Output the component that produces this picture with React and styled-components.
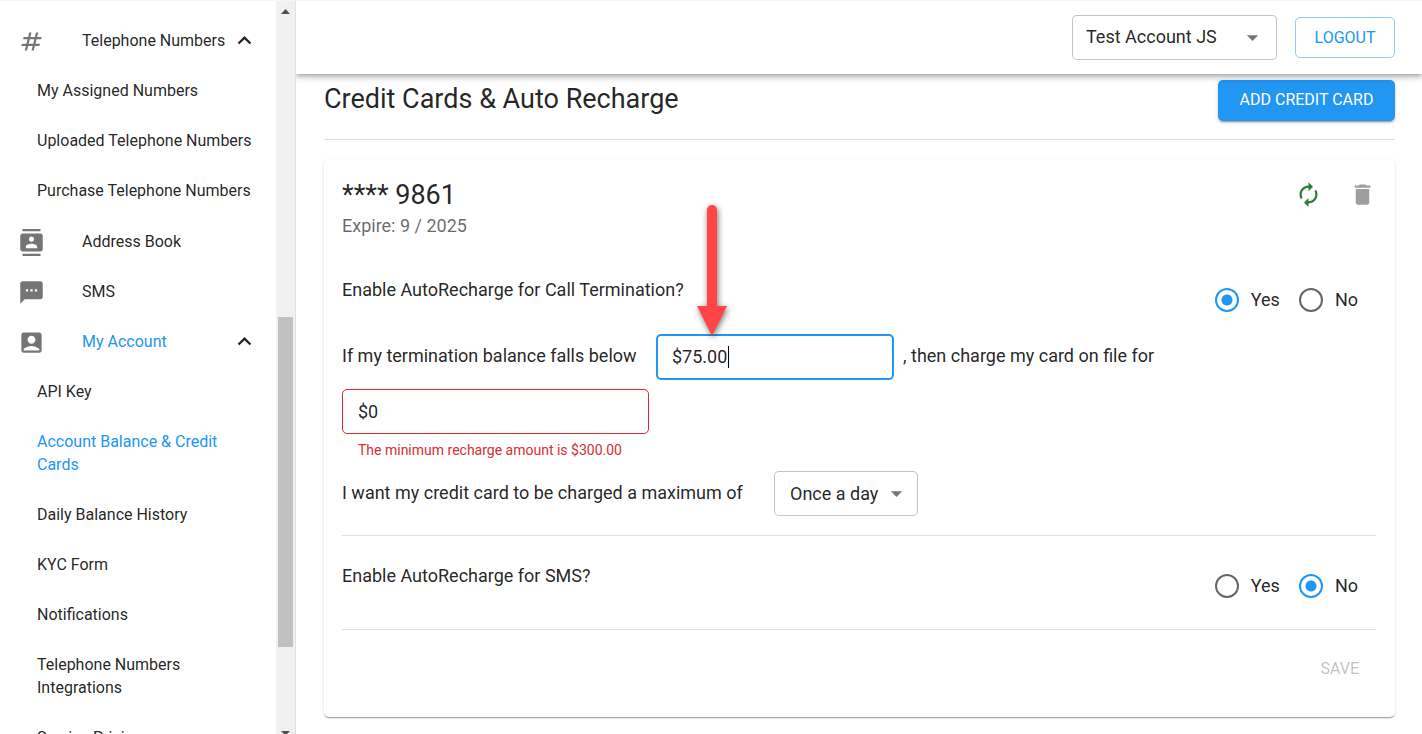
import React, { useState } from "react";
import styled, { createGlobalStyle, css } from "styled-components";
import {
  MdNumbers,
  MdContacts,
  MdSms,
  MdAccountBox,
  MdExpandLess,
  MdAutorenew,
  MdDelete,
  MdArrowDropDown,
} from "react-icons/md";

const color = {
  text: "rgba(0, 0, 0, 0.87)",
  muted: "rgba(0, 0, 0, 0.6)",
  icon: "rgba(0, 0, 0, 0.54)",
  outline: "rgba(0, 0, 0, 0.23)",
  divider: "rgba(0, 0, 0, 0.12)",
  disabled: "rgba(0, 0, 0, 0.26)",
  primary: "#2196f3",
  error: "#d32f2f",
  success: "#2e7d32",
};

const GlobalStyle = createGlobalStyle`
  *, *::before, *::after { box-sizing: border-box; }
  body {
    margin: 0;
    background: #fff;
    color: ${color.text};
    font-family: Roboto, "Liberation Sans", sans-serif;
    font-size: 18px;
    line-height: 27px;
  }
  button, input, select { font: inherit; color: inherit; }
`;

const Page = styled.div`
  display: flex;
  height: 100vh;
  overflow: hidden;
  border-top: 1px solid #f5f5f5;
`;

/* Sidebar */

const Sidebar = styled.aside`
  display: flex;
  flex: none;
  width: 296px;
  border-right: 1px solid #e0e0e0;
  overflow: hidden;
`;

const Nav = styled.nav`
  flex: 1;
  min-width: 0;
  padding-top: 14px;
  font-size: 16px;
  line-height: 23px;
`;

const NavLink = styled.a`
  display: flex;
  align-items: center;
  padding: 14px 18px 13px;
  color: ${(p) => (p.$active ? color.primary : color.text)};
  text-decoration: none;
`;

const SubLink = styled(NavLink)`
  padding-left: 37px;
`;

const SubList = styled.div`
  padding-bottom: 1px;
`;

const NavIcon = styled.span`
  display: flex;
  flex: none;
  width: 64px;
  height: 23px;
  padding-top: 2px;
  align-items: center;
  font-size: 27px;
  color: ${color.icon};

  svg {
    flex: none;
  }
`;

const NavLabel = styled.span`
  flex: 1;
  white-space: nowrap;
`;

const Chevron = styled(MdExpandLess)`
  flex: none;
  margin: -2px 0;
  font-size: 27px;
  color: ${color.text};
`;

const ScrollTrack = styled.div`
  display: flex;
  flex: none;
  flex-direction: column;
  width: 19px;
  padding: 0 2px;
  background: #f1f1f1;
`;

const ScrollArrow = styled.svg`
  flex: none;
  display: block;
  width: 15px;
  height: ${(p) => p.$height}px;
  fill: #505050;
`;

const ScrollThumb = styled.div`
  flex: 330;
  background: #c1c1c1;
`;

const ScrollSpace = styled.div`
  flex: ${(p) => p.$grow};
`;

/* Top bar */

const Content = styled.div`
  display: flex;
  flex: 1;
  flex-direction: column;
  min-width: 0;
`;

const TopBar = styled.header`
  display: flex;
  flex: none;
  align-items: center;
  justify-content: flex-end;
  gap: 18px;
  height: 73px;
  padding: 0 27px;
  background: #fff;
  position: relative;
  z-index: 1;
  box-shadow: 0 2px 4px -1px rgba(0, 0, 0, 0.2), 0 4px 5px rgba(0, 0, 0, 0.14),
    0 1px 10px rgba(0, 0, 0, 0.12);
  clip-path: inset(0 0 -16px 0);
`;

const SelectBox = styled.div`
  position: relative;
  width: ${(p) => p.$width}px;
  max-width: 100%;

  svg {
    position: absolute;
    right: ${(p) => p.$arrowInset}px;
    top: 9px;
    font-size: 27px;
    color: ${color.icon};
    pointer-events: none;
  }
`;

const field = css`
  display: block;
  width: 100%;
  height: 45px;
  padding: 0 15px;
  border: 1px solid ${color.outline};
  border-radius: 5px;
  background: #fff;
  outline: none;
`;

const SelectControl = styled.select`
  ${field}
  appearance: none;
  padding: 0 32px 2px ${(p) => p.$inset}px;
`;

const Button = styled.button`
  height: 41px;
  padding: 0 16px;
  border: 1px solid transparent;
  border-radius: 5px;
  background: transparent;
  font-size: 16px;
  white-space: nowrap;
  text-transform: uppercase;
  cursor: pointer;
  ${(p) =>
    p.$variant === "outlined" &&
    css`
      min-width: 100px;
      border-color: rgba(33, 150, 243, 0.5);
      color: ${color.primary};
    `}
  ${(p) =>
    p.$variant === "contained" &&
    css`
      min-width: 177px;
      padding-bottom: 2px;
      background: ${color.primary};
      color: #fff;
      box-shadow: 0 3px 1px -2px rgba(0, 0, 0, 0.2), 0 2px 2px rgba(0, 0, 0, 0.14),
        0 1px 5px rgba(0, 0, 0, 0.12);
    `}
  &:disabled {
    color: ${color.disabled};
    cursor: default;
  }
`;

/* Main area */

const Main = styled.main`
  flex: 1;
  min-height: 0;
  padding: 6px 27px 17px 28px;
`;

const TitleRow = styled.div`
  display: flex;
  align-items: flex-start;
  justify-content: space-between;
  padding-bottom: 18px;
  border-bottom: 1px solid ${color.divider};
`;

const PageTitle = styled.h1`
  margin: 0;
  font-size: 27px;
  line-height: 39px;
  font-weight: 400;
`;

const Card = styled.section`
  margin-top: 19px;
  padding: 18px 19px 18px 18px;
  border-radius: 5px;
  background: #fff;
  box-shadow: 0 2px 1px -1px rgba(0, 0, 0, 0.2), 0 1px 1px rgba(0, 0, 0, 0.14),
    0 1px 3px rgba(0, 0, 0, 0.12);
`;

const CardHeader = styled.div`
  display: flex;
  justify-content: space-between;
  align-items: flex-start;
`;

const CardNumber = styled.h2`
  margin: 0;
  font-size: 27px;
  line-height: 36px;
  font-weight: 400;
`;

const Expiry = styled.p`
  margin: 0;
  line-height: 25px;
  color: ${color.muted};
`;

const CardActions = styled.div`
  display: flex;
  gap: 9px;
  margin: -5px -9px 0 0;
`;

const IconButton = styled.button`
  display: flex;
  padding: 9px;
  border: 0;
  background: none;
  font-size: 27px;
  color: ${(p) => p.$color};
  cursor: pointer;
`;

const Section = styled.div`
  padding: ${(p) => p.$top}px 0 ${(p) => p.$bottom}px;
  border-bottom: 1px solid ${color.divider};
`;

const OptionRow = styled.fieldset`
  display: flex;
  justify-content: space-between;
  min-width: 0;
  margin: 0;
  padding: 0;
  border: 0;
`;

const RadioGroup = styled.div`
  display: flex;
  gap: 19px;
  height: 46px;
  padding-right: 18px;
`;

const RadioLabel = styled.label`
  display: flex;
  align-items: center;
  gap: 12px;
  cursor: pointer;
`;

const Radio = styled.input.attrs({ type: "radio" })`
  appearance: none;
  flex: none;
  width: 24px;
  height: 24px;
  margin: 2px 0 0;
  border: 2px solid ${color.muted};
  border-radius: 50%;
  &:checked {
    border-color: ${color.primary};
    background: radial-gradient(circle, ${color.primary} 5px, transparent 6px);
  }
`;

const Sentence = styled.div`
  display: flex;
  flex-wrap: wrap;
  align-items: flex-start;
  gap: 9px;
  padding-top: ${(p) => p.$top}px;
  line-height: 44px;
`;

const Phrase = styled.label`
  min-width: ${(p) => p.$width}px;
`;

const FieldBox = styled.div`
  position: relative;
  width: ${(p) => p.$width}px;
  max-width: 100%;
`;

const TextInput = styled.input`
  ${field}
  ${(p) =>
    p.$error &&
    css`
      border-color: ${color.error};
    `}
  ${(p) =>
    p.$focused &&
    css`
      height: 46px;
      padding: 0 14px 2px;
      border: 2px solid ${color.primary};
      caret-color: transparent;
    `}
`;

const HelperText = styled.p`
  margin: 4px 0 0 16px;
  font-size: 14px;
  line-height: 24px;
  white-space: nowrap;
  color: ${color.error};
`;

const Caret = styled.span`
  position: absolute;
  left: 72px;
  top: 12px;
  width: 1px;
  height: 22px;
  background: #000;
`;

const Pointer = styled.svg`
  position: absolute;
  left: 36px;
  bottom: 44px;
  width: 40px;
  height: 144px;
  overflow: visible;
  filter: drop-shadow(1px 2px 3px rgba(0, 0, 0, 0.55));
  pointer-events: none;
`;

const CardFooter = styled.div`
  display: flex;
  justify-content: flex-end;
  padding-top: 18px;
  padding-bottom: 10px;
`;

function Select({ width, inset = 15, arrowInset = 8, options, label, id }) {
  return (
    <SelectBox $width={width} $arrowInset={arrowInset}>
      <SelectControl id={id} aria-label={label} $inset={inset}>
        {options.map((o) => (
          <option key={o}>{o}</option>
        ))}
      </SelectControl>
      <MdArrowDropDown />
    </SelectBox>
  );
}

function YesNo({ name, question, initial }) {
  const [value, setValue] = useState(initial);
  return (
    <OptionRow aria-label={question}>
      <span>{question}</span>
      <RadioGroup>
        {["Yes", "No"].map((option) => (
          <RadioLabel key={option}>
            <Radio
              name={name}
              value={option}
              checked={value === option}
              onChange={() => setValue(option)}
            />
            {option}
          </RadioLabel>
        ))}
      </RadioGroup>
    </OptionRow>
  );
}

function NavItem({ icon: Icon, children, active, expanded }) {
  return (
    <NavLink href="#" $active={active}>
      <NavIcon>
        <Icon />
      </NavIcon>
      <NavLabel>{children}</NavLabel>
      {expanded && <Chevron />}
    </NavLink>
  );
}

const numberLinks = [
  "My Assigned Numbers",
  "Uploaded Telephone Numbers",
  "Purchase Telephone Numbers",
];

const accountLinks = [
  "API Key",
  "Account Balance & Credit Cards",
  "Daily Balance History",
  "KYC Form",
  "Notifications",
  "Telephone Numbers Integrations",
  "Service Pricing",
];

export default function App() {
  const [threshold, setThreshold] = useState("$75.00");
  const [amount, setAmount] = useState("$0");

  return (
    <>
      <GlobalStyle />
      <Page>
        <Sidebar>
          <Nav>
            <NavItem icon={MdNumbers} expanded>
              Telephone Numbers
            </NavItem>
            <SubList>
              {numberLinks.map((t) => (
                <SubLink href="#" key={t}>
                  {t}
                </SubLink>
              ))}
            </SubList>
            <NavItem icon={MdContacts}>Address Book</NavItem>
            <NavItem icon={MdSms}>SMS</NavItem>
            <NavItem icon={MdAccountBox} active expanded>
              My Account
            </NavItem>
            <SubList>
              {accountLinks.map((t) => (
                <SubLink href="#" key={t} $active={t.startsWith("Account")}>
                  {t}
                </SubLink>
              ))}
            </SubList>
          </Nav>
          <ScrollTrack aria-hidden="true">
            <ScrollArrow $height={20} viewBox="0 0 15 20">
              <path d="M3 13 L7.5 8 L12 13 Z" />
            </ScrollArrow>
            <ScrollSpace $grow={296} />
            <ScrollThumb />
            <ScrollSpace $grow={83} />
            <ScrollArrow $height={4} viewBox="0 0 15 4">
              <path d="M3 1 H12 L9 4 H6 Z" />
            </ScrollArrow>
          </ScrollTrack>
        </Sidebar>

        <Content>
          <TopBar>
            <Select
              width={205}
              inset={13}
              arrowInset={11}
              label="Account"
              options={["Test Account JS"]}
            />
            <Button type="button" $variant="outlined">
              Logout
            </Button>
          </TopBar>

          <Main>
            <TitleRow>
              <PageTitle>Credit Cards &amp; Auto Recharge</PageTitle>
              <Button type="button" $variant="contained">
                Add Credit Card
              </Button>
            </TitleRow>

            <Card>
              <CardHeader>
                <div>
                  <CardNumber>**** 9861</CardNumber>
                  <Expiry>Expire: 9 / 2025</Expiry>
                </div>
                <CardActions>
                  <IconButton type="button" aria-label="Auto recharge" $color={color.success}>
                    <MdAutorenew />
                  </IconButton>
                  <IconButton type="button" aria-label="Delete card" $color="#9e9e9e">
                    <MdDelete />
                  </IconButton>
                </CardActions>
              </CardHeader>

              <Section $top={38} $bottom={19}>
                <YesNo
                  name="termination"
                  question="Enable AutoRecharge for Call Termination?"
                  initial="Yes"
                />
                <Sentence $top={12}>
                  <Phrase htmlFor="threshold" $width={305}>
                    If my termination balance falls below
                  </Phrase>
                  <FieldBox $width={238}>
                    <TextInput
                      id="threshold"
                      $focused
                      value={threshold}
                      onChange={(e) => setThreshold(e.target.value)}
                    />
                    <Caret />
                    <Pointer viewBox="0 0 40 144" aria-hidden="true">
                      <path
                        d="M15 18 a5 5 0 0 1 10 0 V114 H35 L20 144 L5 114 H15 Z"
                        fill="#ff4545"
                      />
                    </Pointer>
                  </FieldBox>
                  <Phrase htmlFor="amount" $width={261}>
                    , then charge my card on file for
                  </Phrase>
                  <FieldBox $width={307}>
                    <TextInput
                      id="amount"
                      $error
                      value={amount}
                      aria-describedby="amount-help"
                      onChange={(e) => setAmount(e.target.value)}
                    />
                    <HelperText id="amount-help">
                      The minimum recharge amount is $300.00
                    </HelperText>
                  </FieldBox>
                </Sentence>
                <Sentence $top={9}>
                  <Phrase htmlFor="frequency" $width={423}>
                    I want my credit card to be charged a maximum of
                  </Phrase>
                  <Select id="frequency" width={144} options={["Once a day"]} />
                </Sentence>
              </Section>

              <Section $top={26} $bottom={21}>
                <YesNo name="sms" question="Enable AutoRecharge for SMS?" initial="No" />
              </Section>

              <CardFooter>
                <Button type="button" disabled>
                  Save
                </Button>
              </CardFooter>
            </Card>
          </Main>
        </Content>
      </Page>
    </>
  );
}
